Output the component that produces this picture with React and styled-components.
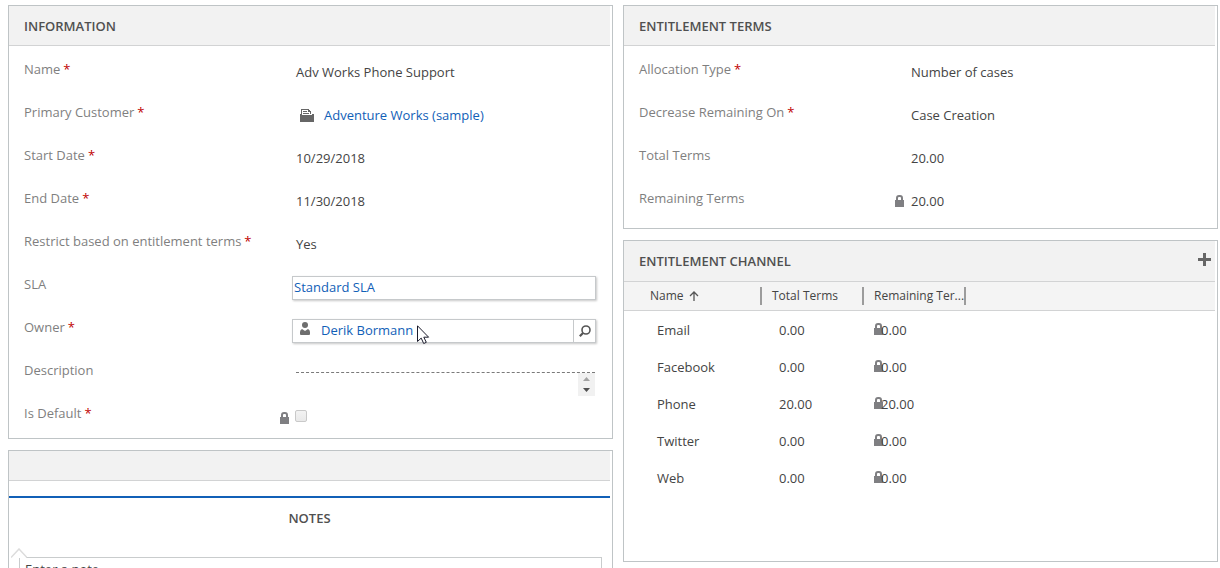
import React, { useState } from 'react';
import styled, { createGlobalStyle } from 'styled-components';

const GlobalStyle = createGlobalStyle`
  * { box-sizing: border-box; }
  body {
    margin: 0;
    height: 100vh;
    overflow: hidden;
    background: #fff;
    color: #444;
    font: 13px/20px "Open Sans", "Noto Sans", sans-serif;
  }
  button, input, textarea { font: inherit; color: inherit; margin: 0; }
`;

const Page = styled.main`
  display: grid;
  grid-template-columns: 605fr 595fr;
  gap: 10px;
  align-items: start;
  padding: 5px 2px 0 8px;
`;

const Column = styled.div`
  display: flex;
  flex-direction: column;
  gap: 11px;
  min-width: 0;
`;

const Panel = styled.section`
  border: 1px solid #bfc4c6;
  padding-right: 2px;
`;

const PanelHeader = styled.header`
  display: flex;
  align-items: center;
  justify-content: space-between;
  height: ${(p) => p.$height || 40}px;
  padding: 0 4px 0 15px;
  background: #f2f2f2;
  border-bottom: 1px solid #d2d3d4;
`;

const Title = styled.h2`
  margin: 0;
  font-size: 13px;
  line-height: 20px;
  font-weight: 600;
  color: #505050;
`;

const Fields = styled.div`
  padding: 5px 14px ${(p) => p.$bottom || 0}px 15px;
`;

const Row = styled.div`
  display: grid;
  grid-template-columns: 268px minmax(0, 1fr);
  height: 43px;
`;

const Label = styled.label`
  padding-top: 8px;
  color: #7f7f7f;
`;

const Star = styled.span`
  margin-left: 3px;
  color: #c00000;
`;

const Value = styled.div`
  display: flex;
  align-items: center;
  height: 20px;
  margin-top: 11px;
  padding-left: 4px;
`;

const Output = styled.output`
  color: #444;
`;

const Link = styled.a`
  color: #1160b7;
  text-decoration: none;
`;

const CustomerIcon = styled.svg`
  margin: 0 10px 0 4px;
`;

const LockIcon = styled.svg`
  flex: none;
`;

const LockSlot = styled.span`
  display: flex;
  margin-left: -16px;
  padding-right: 7px;
`;

const CheckSlot = styled(LockSlot)`
  padding: 4px 6px 0 0;
`;

const Lookup = styled.div`
  display: flex;
  height: 24px;
  margin-top: 10px;
  border: 1px solid #c6c9cb;
  box-shadow: 1px 1px 2px #c8c8c8;
  line-height: 20px;
`;

const LookupText = styled.div`
  display: flex;
  flex: 1;
  padding-left: ${(p) => (p.$icon ? 7 : 1)}px;
`;

const PersonIcon = styled.svg`
  margin: 2px 11px 0 0;
`;

const SearchButton = styled.button`
  display: flex;
  align-items: center;
  justify-content: center;
  width: 22px;
  padding: 0;
  border: 0;
  border-left: 1px solid #c6c9cb;
  background: #fff;
`;

const Description = styled.div`
  display: flex;
  height: 24px;
  margin: 20px 1px 0 4px;
  border-top: 1px dashed #7a7a7a;
`;

const DescriptionInput = styled.textarea`
  flex: 1;
  min-width: 0;
  padding: 0;
  border: 0;
  outline: 0;
  resize: none;
  overflow: hidden;
`;

const Spinner = styled.div`
  display: flex;
  flex-direction: column;
  width: 17px;
  background: #f1f1f1;
`;

const SpinButton = styled.button`
  display: flex;
  flex: 1;
  align-items: center;
  justify-content: center;
  padding: 0;
  border: 0;
  background: none;
`;

const Checkbox = styled.input`
  appearance: none;
  width: 12px;
  height: 12px;
  border: 1px solid #c9c9c9;
  border-radius: 2px;
  background: linear-gradient(#f3f3f3, #e9e9e9);
`;

const AddButton = styled.button`
  display: flex;
  padding: 0 0 4px;
  border: 0;
  background: none;
`;

const ChannelBody = styled.div`
  min-height: 279px;
`;

const Table = styled.table`
  width: 100%;
  table-layout: fixed;
  border-collapse: separate;
  border-spacing: 0;
`;

const Th = styled.th`
  height: 29px;
  padding: 0;
  background: #f4f4f4;
  border-bottom: 1px solid #d2d3d4;
  text-align: left;
  font-weight: 400;
`;

const SortButton = styled.button`
  display: flex;
  align-items: center;
  gap: 5px;
  width: 100%;
  height: 18px;
  padding: 0 0 0 ${(p) => (p.$first ? 26 : 10)}px;
  border: 0;
  border-right: 2px solid #9c9c9c;
  background: none;
  font-size: 12px;
  line-height: 18px;
  white-space: nowrap;
`;

const Td = styled.td`
  height: 37px;
  padding: 0 0 0 ${(p) => (p.$first ? 33 : 17)}px;
`;

const LockedTd = styled(Td)`
  padding-left: 10px;
`;

const Locked = styled.span`
  display: flex;
  align-items: center;

  svg { margin: 0 -2px 2px 0; }
`;

const NotesTab = styled.h2`
  margin: 15px 0 0;
  padding: 10px 0 20px;
  border-top: 2px solid #1160b7;
  text-align: center;
  font-size: 13px;
  line-height: 20px;
  font-weight: 600;
  color: #505050;
`;

const NoteArea = styled.div`
  display: flex;
  flex-direction: column;
  padding: 0 8px 8px 2px;
`;

const Caret = styled.svg`
  position: relative;
  z-index: 1;
  margin-bottom: -1px;
`;

const NoteInput = styled.textarea`
  height: 60px;
  margin-left: 8px;
  padding: 1px 5px;
  border: 1px solid #c9cccd;
  resize: none;

  &::placeholder { color: #444; opacity: 1; }
`;

const Pointer = styled.svg`
  position: absolute;
  left: 4px;
  top: 5px;
  pointer-events: none;
`;

const PointerAnchor = styled.span`
  position: relative;
`;

function Lock() {
  return (
    <LockIcon width="9" height="12" viewBox="0 0 9 12" aria-hidden="true">
      <path d="M0 5h9v7H0z" fill="#7f7f82" />
      <path d="M2 5.5V3a2 2 0 0 1 2-2h1a2 2 0 0 1 2 2v2.5" fill="none" stroke="#7f7f82" strokeWidth="2" />
    </LockIcon>
  );
}

function Field({ id, label, required, children }) {
  return (
    <Row>
      <Label htmlFor={id}>
        {label}
        {required && <Star>*</Star>}
      </Label>
      {children}
    </Row>
  );
}

function TextField({ id, label, required, locked, value }) {
  return (
    <Field id={id} label={label} required={required}>
      <Value>
        {locked && <LockSlot><Lock /></LockSlot>}
        <Output id={id}>{value}</Output>
      </Value>
    </Field>
  );
}

const channels = [
  ['Email', '0.00', '0.00'],
  ['Facebook', '0.00', '0.00'],
  ['Phone', '20.00', '20.00'],
  ['Twitter', '0.00', '0.00'],
  ['Web', '0.00', '0.00'],
];

export default function App() {
  const [description, setDescription] = useState('');

  return (
    <>
      <GlobalStyle />
      <Page>
        <Column>
          <Panel>
            <PanelHeader><Title>INFORMATION</Title></PanelHeader>
            <Fields>
              <TextField id="name" label="Name" required value="Adv Works Phone Support" />
              <Field label="Primary Customer" required>
                <Value>
                  <CustomerIcon width="14" height="13" viewBox="0 0 14 13" shapeRendering="crispEdges" aria-hidden="true">
                    <path d="M1 0h8v1h1v1h1v3h3v8H0V5h1zM2 1v5h10V5h-2V3H8V1z" fill="#666" fillRule="evenodd" />
                    <path d="M3 2h4v1H3zM3 4h6v1H3z" fill="#666" />
                  </CustomerIcon>
                  <Link href="#customer">Adventure Works (sample)</Link>
                </Value>
              </Field>
              <TextField id="start" label="Start Date" required value="10/29/2018" />
              <TextField id="end" label="End Date" required value="11/30/2018" />
              <TextField id="restrict" label="Restrict based on entitlement terms" required value="Yes" />
              <Field label="SLA">
                <Lookup>
                  <LookupText><Link href="#sla">Standard SLA</Link></LookupText>
                </Lookup>
              </Field>
              <Field id="owner" label="Owner" required>
                <Lookup>
                  <LookupText $icon>
                    <PersonIcon width="10" height="13" viewBox="0 0 10 13" aria-hidden="true">
                      <circle cx="5" cy="3" r="3" fill="#6e6e6e" />
                      <path d="M2 7l3 2 3-2q2 1 2 3v2q0 1-1 1H1q-1 0-1-1v-2q0-2 2-3z" fill="#6e6e6e" />
                    </PersonIcon>
                    <Link href="#owner">Derik Bormann</Link>
                    <PointerAnchor>
                      <Pointer width="13" height="20" viewBox="0 0 13 20" aria-hidden="true">
                        <path d="M.5.8v15.7l3.7-3.4 2.5 5.4 2.6-1.2-2.5-5.1h4.8z" fill="#fff" stroke="#1b1b2b" />
                      </Pointer>
                    </PointerAnchor>
                  </LookupText>
                  <SearchButton id="owner" type="button" aria-label="Look up owner">
                    <svg width="12" height="12" viewBox="0 0 12 12" fill="none" stroke="#555" aria-hidden="true">
                      <circle cx="7" cy="5" r="4" strokeWidth="1.6" />
                      <path d="M4 8L.8 11.2" strokeWidth="2.2" />
                    </svg>
                  </SearchButton>
                </Lookup>
              </Field>
              <Field id="description" label="Description">
                <Description>
                  <DescriptionInput
                    id="description"
                    value={description}
                    onChange={(e) => setDescription(e.target.value)}
                  />
                  <Spinner>
                    <SpinButton type="button" aria-label="Scroll up">
                      <svg width="7" height="4" viewBox="0 0 7 4"><path d="M0 4L3.5 0 7 4z" fill="#a3a3a3" /></svg>
                    </SpinButton>
                    <SpinButton type="button" aria-label="Scroll down">
                      <svg width="7" height="4" viewBox="0 0 7 4"><path d="M0 0L3.5 4 7 0z" fill="#505050" /></svg>
                    </SpinButton>
                  </Spinner>
                </Description>
              </Field>
              <Field id="default" label="Is Default" required>
                <Value>
                  <CheckSlot><Lock /></CheckSlot>
                  <Checkbox id="default" type="checkbox" disabled />
                </Value>
              </Field>
            </Fields>
          </Panel>
          <Panel>
            <PanelHeader $height={30} />
            <NotesTab>NOTES</NotesTab>
            <NoteArea>
              <Caret width="16" height="10" viewBox="0 0 16 10" aria-hidden="true">
                <path d="M1 9l7-8 7 8v1H1z" fill="#fff" />
                <path d="M0 9.500l8-8.500 8 8.500" fill="none" stroke="#dcdcdc" strokeWidth="1.500" />
              </Caret>
              <NoteInput aria-label="Note" placeholder="Enter a note" />
            </NoteArea>
          </Panel>
        </Column>
        <Column>
          <Panel>
            <PanelHeader><Title>ENTITLEMENT TERMS</Title></PanelHeader>
            <Fields $bottom={5}>
              <TextField id="allocation" label="Allocation Type" required value="Number of cases" />
              <TextField id="decrease" label="Decrease Remaining On" required value="Case Creation" />
              <TextField id="total" label="Total Terms" value="20.00" />
              <TextField id="remaining" label="Remaining Terms" locked value="20.00" />
            </Fields>
          </Panel>
          <Panel>
            <PanelHeader $height={41}>
              <Title>ENTITLEMENT CHANNEL</Title>
              <AddButton type="button" aria-label="Add channel">
                <svg width="13" height="13" viewBox="0 0 13 13"><path d="M5 0h3v5h5v3H8v5H5V8H0V5h5z" fill="#666" /></svg>
              </AddButton>
            </PanelHeader>
            <ChannelBody>
              <Table>
                <colgroup>
                  <col width="138" />
                  <col width="102" />
                  <col width="102" />
                  <col />
                </colgroup>
                <thead>
                  <tr>
                    <Th>
                      <SortButton type="button" $first>
                        Name
                        <svg width="10" height="10" viewBox="0 0 10 10" fill="none" stroke="#555" aria-hidden="true">
                          <path d="M5 10V1M1 5l4-4 4 4" strokeWidth="1.300" />
                        </svg>
                      </SortButton>
                    </Th>
                    <Th><SortButton type="button">Total Terms</SortButton></Th>
                    <Th><SortButton type="button">Remaining Ter...</SortButton></Th>
                    <Th aria-hidden="true" />
                  </tr>
                </thead>
                <tbody>
                  {channels.map(([name, total, remaining]) => (
                    <tr key={name}>
                      <Td $first>{name}</Td>
                      <Td>{total}</Td>
                      <LockedTd><Locked><Lock />{remaining}</Locked></LockedTd>
                      <td />
                    </tr>
                  ))}
                </tbody>
              </Table>
            </ChannelBody>
          </Panel>
        </Column>
      </Page>
    </>
  );
}
